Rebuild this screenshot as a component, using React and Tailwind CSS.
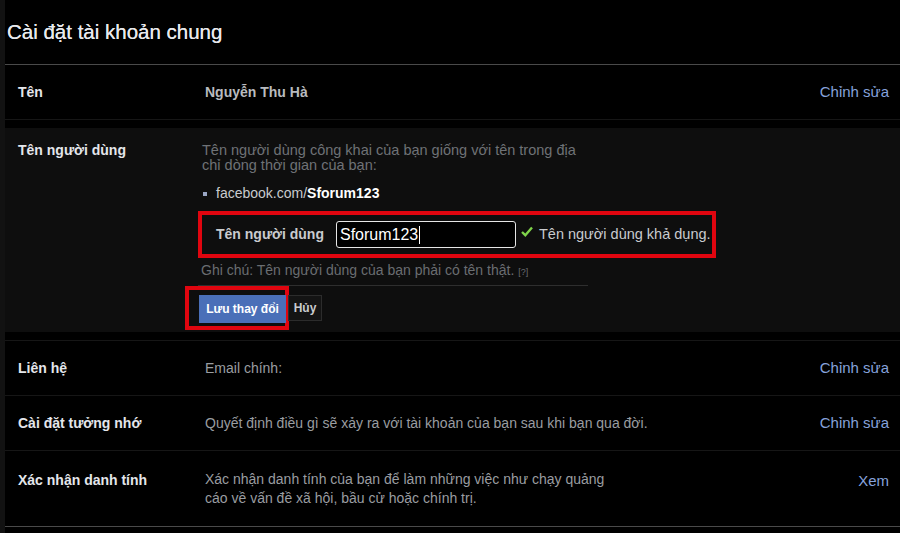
import React from "react";

const font = { fontFamily: '"Liberation Sans", Arial, sans-serif' };

function Row({ label, children, action, className = "" }) {
  return (
    <div className={`flex border-t border-[#161616] ${className}`}>
      <div className="w-[200px] shrink-0 pl-[13px] text-[14px] font-bold text-[#e4e6eb]">{label}</div>
      <div className="flex-1 text-[14px] text-[#9a9da1]">{children}</div>
      {action && <div className="pr-[11px] text-[15px] text-[#86a2dc]">{action}</div>}
    </div>
  );
}

export default function App() {
  return (
    <div className="h-[533px] w-[900px] overflow-hidden bg-black" style={font}>
      <div className="h-full border-l-[5px] border-[#121212]">
        <div className="flex h-[64px] items-center pl-[2px] text-[20.5px] text-[#e8e9ec] [text-shadow:0_0_0.4px_#e8e9ec]">
          Cài đặt tài khoản chung
        </div>
        <div className="h-px bg-[#4a4a4a]" />

        <Row label="Tên" action="Chỉnh sửa" className="!border-t-0 h-[54px] items-center">
          <span className="font-bold text-[#b8bbbf]">Nguyễn Thu Hà</span>
        </Row>

        <div className="border-t border-[#161616] py-[8px]">
          <div className="flex h-[204px] bg-[#0e0e0e] pt-[12px]">
            <div className="w-[200px] shrink-0 pl-[13px] text-[14px] font-bold text-[#e4e6eb]">Tên người dùng</div>
            <div className="flex-1">
              <div className="ml-[-3px] mt-[3px] w-[380px] text-[14.5px] leading-[15px] text-[#6f7276]">
                Tên người dùng công khai của bạn giống với tên trong địa chỉ dòng thời gian của bạn:
              </div>
              <div className="mt-[10px] flex items-center text-[14px] text-[#c9cbce]">
                <span className="mr-[9px] ml-[-2px] inline-block h-[4px] w-[4px] bg-[#9aa6c4]" />
                facebook.com/<span className="font-bold text-white">Sforum123</span>
              </div>
              <div className="ml-[-7px] mt-[7px] flex h-[47px] w-[518px] items-center border-[4px] border-[#e0050f] pl-[14px]">
                <span className="text-[14px] font-bold text-[#c9cbce]">Tên người dùng</span>
                <div className="ml-[12px] flex h-[27px] w-[180px] items-center rounded-[3px] border border-[#e6e6e6] bg-black pl-[3px] text-[16px] text-white">
                  Sforum123<span className="ml-px inline-block h-[18px] w-px bg-white" />
                </div>
                <svg className="ml-[5px] mb-[6px]" width="12" height="11" viewBox="0 0 12 11">
                  <path d="M1 6 L4.3 9.2 L11 1.5" stroke="#7fd34a" strokeWidth="2.4" fill="none" />
                </svg>
                <span className="ml-[6px] text-[14.5px] text-[#c9cbce]">Tên người dùng khả dụng.</span>
              </div>
              <div className="ml-[-4px] mt-[2px] text-[14px] text-[#6a6d71]">
                Ghi chú: Tên người dùng của bạn phải có tên thật. <span className="text-[9px]">[?]</span>
              </div>
              <div className="ml-[-7px] mt-[4px] h-px w-[390px] bg-[#2e2e2e]" />
              <div className="ml-[-20px] flex items-start">
                <div className="h-[44px] w-[104px] border-[4px] border-[#e0050f] pl-[10px] pt-[5px]">
                  <div className="flex h-[28px] w-[87px] items-center justify-center bg-[#4a6fb8] text-[12px] font-bold text-white">
                    Lưu thay đổi
                  </div>
                </div>
                <div className="ml-[-1px] mt-[9px] flex h-[26px] w-[34px] items-center justify-center border border-[#2c2c2c] bg-[#141414] text-[12px] font-bold text-[#c9cbce]">
                  Hủy
                </div>
              </div>
            </div>
          </div>
        </div>

        <Row label="Liên hệ" action="Chỉnh sửa" className="h-[55px] items-center">
          Email chính:
        </Row>
        <Row label="Cài đặt tưởng nhớ" action="Chỉnh sửa" className="h-[55px] items-center">
          Quyết định điều gì sẽ xảy ra với tài khoản của bạn sau khi bạn qua đời.
        </Row>
        <Row label="Xác nhận danh tính" action="Xem" className="h-[76px] items-start pt-[19px]">
          <div className="leading-[19px]">
            Xác nhận danh tính của bạn để làm những việc như chạy quảng
            <br />
            cáo về vấn đề xã hội, bầu cử hoặc chính trị.
          </div>
        </Row>
        <div className="h-px bg-[#4a4a4a]" />
      </div>
    </div>
  );
}
